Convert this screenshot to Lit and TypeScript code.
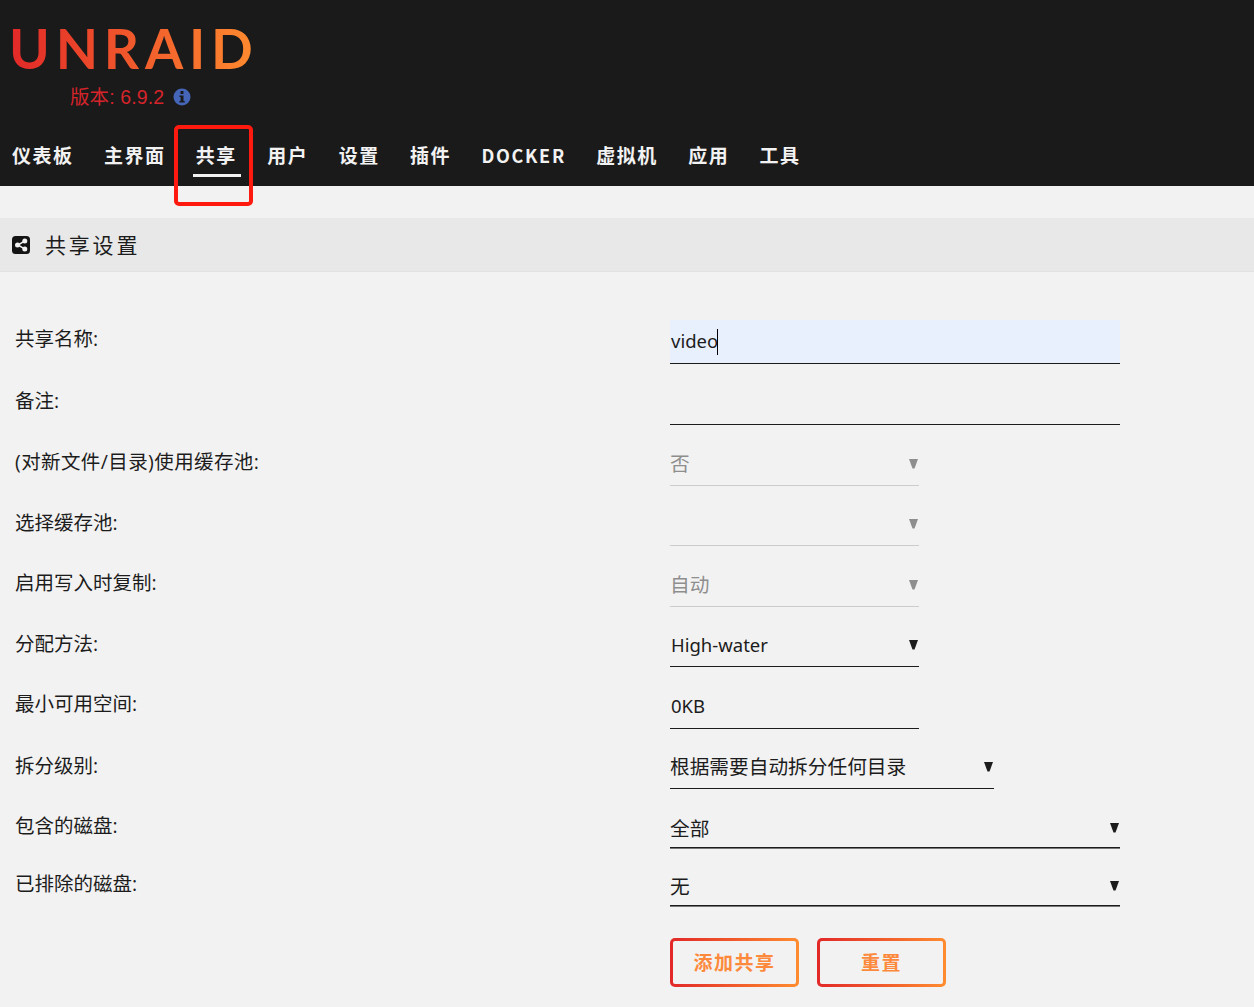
import { LitElement, html, css, svg } from "lit";
import { customElement } from "lit/decorators.js";

interface Row { label: string; value: string; w: number; h: number; lo: number; vo: number; kind: string; latin?: boolean; caret?: boolean; arrow?: boolean; wide?: boolean; }

const rows: Row[] = [
  { label: "共享名称:", value: "video", w: 450, h: 44, lo: 25, vo: 22, kind: "focus", caret: true, latin: true },
  { label: "备注:", value: "", w: 450, h: 61, lo: 24, vo: 22, kind: "on" },
  { label: "(对新文件/目录)使用缓存池:", value: "否", w: 249, h: 61, lo: 24, vo: 21, kind: "off", arrow: true, wide: true },
  { label: "选择缓存池:", value: "", w: 249, h: 60, lo: 23, vo: 21, kind: "off", arrow: true },
  { label: "启用写入时复制:", value: "自动", w: 249, h: 61, lo: 24, vo: 21, kind: "off", arrow: true },
  { label: "分配方法:", value: "High-water", w: 249, h: 60, lo: 23, vo: 21, kind: "on", arrow: true, latin: true },
  { label: "最小可用空间:", value: "0KB", w: 249, h: 62, lo: 25, vo: 22, kind: "on", latin: true },
  { label: "拆分级别:", value: "根据需要自动拆分任何目录", w: 324, h: 60, lo: 23, vo: 21, kind: "on", arrow: true },
  { label: "包含的磁盘:", value: "全部", w: 450, h: 59, lo: 22, vo: 18, kind: "on thick", arrow: true },
  { label: "已排除的磁盘:", value: "无", w: 450, h: 58, lo: 22, vo: 18, kind: "on thick", arrow: true },
];

const nav = ["仪表板", "主界面", "共享", "用户", "设置", "插件", "DOCKER", "虚拟机", "应用", "工具"];

@customElement("app-root")
export class AppRoot extends LitElement {
  static styles = css`
    :host { display: block; position: relative; width: 1254px; height: 1007px; overflow: hidden; background: #f2f2f2;
      font-family: "Noto Sans CJK SC", sans-serif; color: #1c1c1c; }
    header { height: 186px; box-sizing: border-box; background: #1a1a1a; padding: 15px 0 0 12px; display: flex; flex-direction: column; }
    .logo { font: 700 55px/66px "Lato", sans-serif; letter-spacing: 5.8px; width: max-content; margin-left: -3px;
      background: linear-gradient(90deg, #e22828, #ff8c2f); -webkit-background-clip: text; background-clip: text; color: transparent; }
    .version { display: flex; align-items: center; gap: 9px; margin: 2px 0 0 58px; height: 28px;
      font: 400 19.5px/28px "Liberation Sans", "Noto Sans CJK SC", sans-serif; letter-spacing: 0.1px; color: #d6242a; }
    .version svg { width: 18px; height: 18px; display: block; }
    nav { display: flex; gap: 30.4px; margin-top: 31px; }
    nav a { position: relative; font: 700 19px/26px "Noto Sans CJK SC", sans-serif; letter-spacing: 1.5px; color: #f2f2f2; }
    nav a.latin { font-size: 18px; letter-spacing: 1.7px; }
    nav a.active::after { content: ""; position: absolute; left: -3px; right: -4px; top: 32px; height: 3px; background: #f2f2f2; }
    .title { margin-top: 32px; height: 53px; box-sizing: content-box; display: flex; align-items: center; gap: 15px; padding-left: 12px;
      background: #e8e8e8; border-bottom: 1px solid #e2e2e2; font: 400 21px/28px "Noto Sans CJK SC", sans-serif; letter-spacing: 2.8px; color: #1c1c1c; }
    .title span { margin-bottom: 2px; }
    .title svg { width: 18px; height: 18px; display: block; }
    form { padding-top: 48px; }
    .row { display: flex; align-items: flex-end; }
    .label { box-sizing: border-box; width: 670px; padding-left: 15px; font: 400 19.5px/28px "Open Sans", "Noto Sans CJK SC", sans-serif; color: #1c1c1c; }
    .label.wide { letter-spacing: 0.4px; }
    .field { box-sizing: border-box; display: flex; align-items: center; height: 100%; padding-right: 1px;
      border-bottom: 1px solid #1c1c1c; font-size: 19.7px; line-height: 28px; }
    .val { flex: none; align-self: flex-end; line-height: 28px; margin-bottom: 1px; }
    .val.latin { font: 400 18.5px/28px "Noto Sans", sans-serif; padding-left: 1px; margin-bottom: 0; }
    .spacer { flex: 1; }
    .field.focus { background: #e8f0fe; height: 44px; }
    .field.on { color: #1c1c1c; }
    .field.off { color: #8e8e8e; border-bottom-color: #ccc; }
    .field.thick { box-shadow: 0 1px 0 #777; }
    .cursor { flex: none; align-self: flex-end; width: 1px; height: 26px; background: #000; margin: 0 0 0 -1px; }
    .arrow { flex: none; align-self: flex-end; width: 9px; height: 10px; display: block; fill: currentColor; margin-bottom: 9px; }
    .field.thick .arrow { margin-bottom: 10px; }
    .actions { display: flex; gap: 18px; padding: 32px 0 0 670px; }
    .btn { box-sizing: border-box; width: 129px; height: 49px; display: flex; align-items: center; justify-content: center; padding-bottom: 2px;
      border: 3px solid transparent; border-radius: 5px;
      background: linear-gradient(#f2f2f2, #f2f2f2) padding-box, linear-gradient(90deg, #e22828, #ff8c2f) border-box;
      font: 700 19px/26px "Noto Sans CJK SC", sans-serif; letter-spacing: 1.5px; color: #fd8a3c; }
    .mark { position: absolute; left: 174px; top: 125px; width: 79px; height: 81px; box-sizing: border-box;
      border: 4px solid #ff1a0f; border-radius: 5px; pointer-events: none; }
  `;

  private arrow() {
    return html`<svg class="arrow" viewBox="0 0 9 10">${svg`<polygon points="0,0 9,0 5.5,9.5 3.5,9.500"></polygon>`}</svg>`;
  }

  render() {
    return html`
      <header>
        <div class="logo">UNRAID</div>
        <div class="version">版本: 6.9.2
          <svg viewBox="0 0 18 18">
            <circle cx="9" cy="9" r="8.5" fill="#4465b8"></circle>
            <rect x="7.5" y="3" width="3" height="3" rx="0.6" fill="#1a1a1a"></rect>
            <path d="M6.500 7.500h4v5.500h1.200v1.600H6.400V13h1.200V9.100H6.500z" fill="#1a1a1a"></path>
          </svg>
        </div>
        <nav>
          ${nav.map((n) => html`<a class="${n === "共享" ? "active" : ""} ${n === "DOCKER" ? "latin" : ""}">${n}</a>`)}
        </nav>
      </header>
      <div class="title">
        <svg viewBox="0 0 18 18">
          <rect x="0" y="0" width="18" height="18" rx="3.5" fill="#141414"></rect>
          <path d="M12.500 5.200 6 9l6.500 3.800" fill="none" stroke="#f2f2f2" stroke-width="1.500"></path>
          <circle cx="12.800" cy="5" r="2.500" fill="#f2f2f2"></circle>
          <circle cx="12.800" cy="13" r="2.500" fill="#f2f2f2"></circle>
          <circle cx="5.500" cy="9" r="2.500" fill="#f2f2f2"></circle>
        </svg>
        <span>共享设置</span>
      </div>
      <form>
        ${rows.map((r) => html`
          <div class="row" style="height:${r.h}px">
            <div class="label ${r.wide ? "wide" : ""}" style="padding-bottom:${r.lo - 14}px">${r.label}</div>
            <div class="field ${r.kind}" style="width:${r.w}px;padding-bottom:${r.vo - 14}px">
              <span class="val ${r.latin ? "latin" : ""}">${r.value}</span>
              ${r.caret ? html`<span class="cursor"></span>` : ""}
              <span class="spacer"></span>
              ${r.arrow ? this.arrow() : ""}
            </div>
          </div>
        `)}
        <div class="actions">
          <div class="btn">添加共享</div>
          <div class="btn">重置</div>
        </div>
      </form>
      <div class="mark"></div>
    `;
  }
}
